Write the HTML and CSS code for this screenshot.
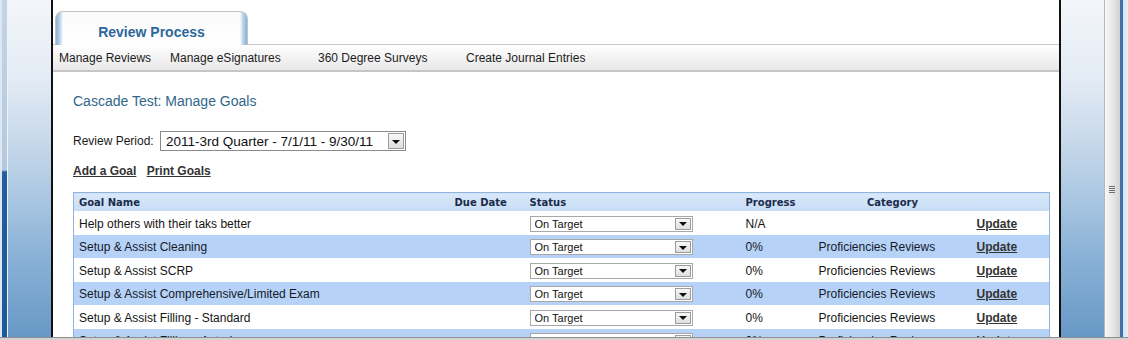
FILE: index.html
```html
<!DOCTYPE html>
<html lang="en">
<head>
    <meta charset="UTF-8">
    <meta name="viewport" content="width=device-width, initial-scale=1.0">
    <title>Cascade Test: Manage Goals</title>
    <link rel="stylesheet" href="styles.css">
</head>
<body>
    <div class="screen">
        <div class="frame-left">
            <div class="side-strip"></div>
            <div class="side-line"></div>
            <div class="glass"></div>
        </div>

        <div class="window">
            <div class="tabs">
                <div class="tab">Review Process</div>
            </div>
            <div class="nav">
                <span class="nav-item first">Manage Reviews</span>
                <span class="nav-item">Manage eSignatures</span>
                <span class="nav-item">360 Degree Surveys</span>
                <span class="nav-item">Create Journal Entries</span>
            </div>

            <div class="content">
                <h1 class="page-title">Cascade Test: Manage Goals</h1>

                <div class="period-row">
                    <span class="period-label">Review Period:</span>
                    <div class="select period-select">
                        <span class="select-text">2011-3rd Quarter - 7/1/11 - 9/30/11</span>
                        <span class="select-btn"><span class="arrow"></span></span>
                    </div>
                </div>

                <div class="actions">
                    <a href="#">Add a Goal</a>
                    <a href="#">Print Goals</a>
                </div>

                <table class="goals">
                    <colgroup>
                        <col class="c-name">
                        <col class="c-due">
                        <col class="c-status">
                        <col class="c-progress">
                        <col class="c-category">
                        <col class="c-update">
                    </colgroup>
                    <thead>
                        <tr>
                            <th>Goal Name</th>
                            <th>Due Date</th>
                            <th>Status</th>
                            <th>Progress</th>
                            <th class="center">Category</th>
                            <th></th>
                        </tr>
                    </thead>
                    <tbody>
                        <tr>
                            <td>Help others with their taks better</td>
                            <td></td>
                            <td><div class="select row-select"><span class="select-text">On Target</span><span class="select-btn"><span class="arrow"></span></span></div></td>
                            <td>N/A</td>
                            <td></td>
                            <td><a href="#">Update</a></td>
                        </tr>
                        <tr class="alt">
                            <td>Setup &amp; Assist Cleaning</td>
                            <td></td>
                            <td><div class="select row-select"><span class="select-text">On Target</span><span class="select-btn"><span class="arrow"></span></span></div></td>
                            <td>0%</td>
                            <td>Proficiencies Reviews</td>
                            <td><a href="#">Update</a></td>
                        </tr>
                        <tr>
                            <td>Setup &amp; Assist SCRP</td>
                            <td></td>
                            <td><div class="select row-select"><span class="select-text">On Target</span><span class="select-btn"><span class="arrow"></span></span></div></td>
                            <td>0%</td>
                            <td>Proficiencies Reviews</td>
                            <td><a href="#">Update</a></td>
                        </tr>
                        <tr class="alt">
                            <td>Setup &amp; Assist Comprehensive/Limited Exam</td>
                            <td></td>
                            <td><div class="select row-select"><span class="select-text">On Target</span><span class="select-btn"><span class="arrow"></span></span></div></td>
                            <td>0%</td>
                            <td>Proficiencies Reviews</td>
                            <td><a href="#">Update</a></td>
                        </tr>
                        <tr>
                            <td>Setup &amp; Assist Filling - Standard</td>
                            <td></td>
                            <td><div class="select row-select"><span class="select-text">On Target</span><span class="select-btn"><span class="arrow"></span></span></div></td>
                            <td>0%</td>
                            <td>Proficiencies Reviews</td>
                            <td><a href="#">Update</a></td>
                        </tr>
                        <tr class="alt">
                            <td>Setup &amp; Assist Filling - Anterior</td>
                            <td></td>
                            <td><div class="select row-select"><span class="select-text">On Target</span><span class="select-btn"><span class="arrow"></span></span></div></td>
                            <td>0%</td>
                            <td>Proficiencies Reviews</td>
                            <td><a href="#">Update</a></td>
                        </tr>
                    </tbody>
                </table>
            </div>
        </div>

        <div class="frame-right">
            <div class="glass"></div>
            <div class="scrollbar">
                <span class="grip"></span>
            </div>
            <div class="edge"></div>
        </div>
    </div>
    <div class="bottom-edge"></div>
</body>
</html>
```

FILE: styles.css
```css
body {
    margin: 0;
    font-family: "Liberation Sans", Arial, sans-serif;
    background-color: #fff;
    overflow: hidden;
}
.screen {
    display: flex;
    height: 337px;
    overflow: hidden;
}

/* window frame around the page */
.frame-left {
    display: flex;
    width: 51px;
}
.side-strip {
    width: 5px;
    border-left: 2px solid #dfe7f0;
    background: linear-gradient(to bottom, #c3d4e7 0, #b4c9e0 170px, #235f9e 172px, #1d5a99 100%);
}
.side-line {
    width: 1px;
    background-color: #eef3f8;
}
.glass {
    flex: 1;
    background: linear-gradient(to bottom, #f3f6fa 0, #e3ebf4 80px, #b9d0e6 170px, #8db4d8 250px, #6898c6 337px);
}
.frame-right {
    display: flex;
    width: 67px;
}
.frame-right .glass {
    width: 43px;
    flex: none;
}
.scrollbar {
    width: 15px;
    border-left: 1px solid #b8b8b8;
    background: linear-gradient(to right, #f7f7f7, #e4e4e4 60%, #d2d2d2);
    position: relative;
}
.grip {
    position: absolute;
    left: 4px;
    top: 186px;
    width: 6px;
    height: 7px;
    background: repeating-linear-gradient(to bottom, #6f6f6f 0, #6f6f6f 1px, transparent 1px, transparent 2px);
}
.edge {
    width: 8px;
    background: linear-gradient(to right, #3f71a8 0, #3f71a8 3px, #d5e3f1 3px, #e6eef7 100%);
}
.bottom-edge {
    height: 2px;
    border-top: 1px solid #8f8f8f;
    background-color: #d3d3d3;
}

/* page inside the window */
.window {
    width: 1006px;
    border-left: 2px solid #111;
    border-right: 2px solid #111;
    background-color: #fff;
    overflow: hidden;
}
.tabs {
    padding: 11px 0 0 2px;
    position: relative;
    z-index: 1;
}
.tab {
    width: 193px;
    height: 34px;
    box-sizing: border-box;
    padding-top: 12px;
    margin-bottom: -1px;
    border: 1px solid #c4c4c4;
    border-bottom: none;
    border-radius: 8px 8px 0 0;
    background:
        linear-gradient(to right, #88b0d8 0, #bcd4ea 4px, rgba(255,255,255,0) 7px, rgba(255,255,255,0) calc(100% - 7px), #bcd4ea calc(100% - 4px), #88b0d8 100%),
        linear-gradient(to bottom, #fafafa, #fff);
    text-align: center;
    font-size: 14px;
    font-weight: bold;
    color: #2c679b;
}
.nav {
    display: flex;
    align-items: center;
    height: 25px;
    padding-left: 6px;
    border-top: 1px solid #c9c9c9;
    border-bottom: 2px solid #c6c6c6;
    background: linear-gradient(to bottom, #fff, #f3f3f3 50%, #e9e9e9);
    font-size: 12px;
    color: #1c1c1c;
}
.nav-item {
    width: 148px;
    white-space: nowrap;
}
.nav-item.first {
    width: 111px;
}
.content {
    padding-left: 20px;
}
.page-title {
    margin: 21px 0 0;
    font-size: 14px;
    font-weight: normal;
    line-height: 17px;
    color: #30678a;
}
.period-row {
    display: flex;
    align-items: center;
    margin-top: 21px;
    font-size: 12px;
    color: #1a1a1a;
}
.period-label {
    width: 87px;
}

/* fake select boxes */
.select {
    display: flex;
    align-items: center;
    box-sizing: border-box;
    background-color: #fff;
    color: #111;
}
.select-text {
    flex: 1;
    white-space: nowrap;
    overflow: hidden;
}
.select-btn {
    display: flex;
    align-items: center;
    justify-content: center;
    box-sizing: border-box;
    border: 1px solid #9c9c9c;
    background: linear-gradient(to bottom, #f8f8f8, #dedede);
}
.arrow {
    width: 0;
    height: 0;
    border-left: 4px solid transparent;
    border-right: 4px solid transparent;
    border-top: 4px solid #111;
    margin-top: 1px;
}
.period-select {
    width: 246px;
    height: 20px;
    border: 1px solid #8a8a8a;
    font-size: 13.5px;
    padding: 0 1px 0 5px;
}
.period-select .select-btn {
    width: 16px;
    height: 16px;
}
.row-select {
    width: 163px;
    height: 16px;
    border: 1px solid #a8a8a8;
    font-size: 11px;
    padding: 0 1px 0 4px;
}
.row-select .select-btn {
    width: 16px;
    height: 12px;
}

.actions {
    margin-top: 13px;
    font-size: 12px;
    line-height: 14px;
}
.actions a,
.goals a {
    color: #333;
    font-weight: bold;
    text-decoration: underline;
}
.actions a {
    margin-right: 7px;
}

/* goals table */
.goals {
    margin-top: 14px;
    width: 976px;
    border-collapse: collapse;
    border: 1px solid #8fb4de;
    table-layout: fixed;
    font-size: 12px;
    color: #151515;
}
.c-name { width: 376px; }
.c-due { width: 75px; }
.c-status { width: 216px; }
.c-progress { width: 73px; }
.c-category { width: 158px; }
.c-update { width: 78px; }
.goals th {
    height: 17px;
    padding: 1px 0 0 5px;
    text-align: left;
    font-family: "DejaVu Sans", Verdana, sans-serif;
    font-size: 10px;
    font-weight: bold;
    color: #1a2b4c;
    background: linear-gradient(to bottom, #dae8f9, #c7dcf5);
}
.goals th.center {
    text-align: center;
    padding-left: 0;
}
.goals td {
    height: 23px;
    padding: 1px 0 0 5px;
    white-space: nowrap;
}
.goals tr.alt td {
    height: 22px;
    background-color: #b6d2f6;
    color: #141a2a;
}
```
